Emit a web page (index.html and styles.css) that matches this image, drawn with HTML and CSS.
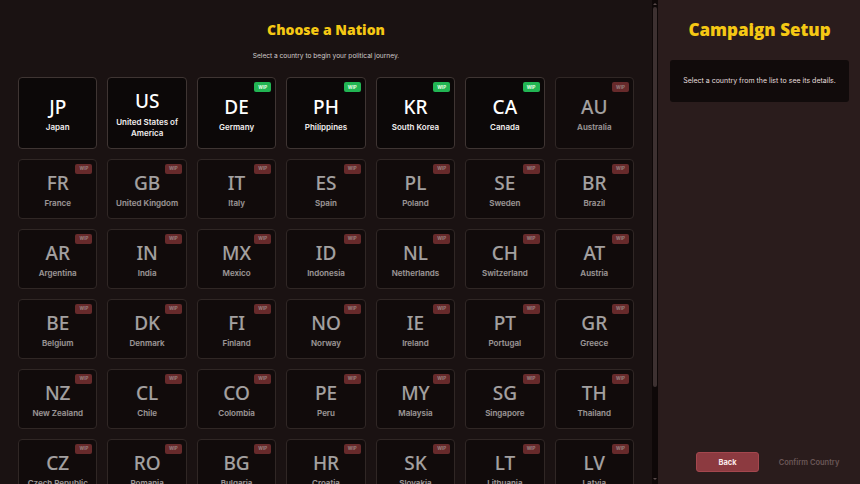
FILE: index.html
```html
<!DOCTYPE html>
<html lang="en">
<head>
<meta charset="utf-8">
<title>Choose a Nation</title>
<link rel="stylesheet" href="styles.css">
</head>
<body>
<main class="picker">
  <header class="picker-head">
    <h1 class="picker-title">Choose a Nation</h1>
    <p class="picker-sub">Select a country to begin your political journey.</p>
  </header>
  <div class="grid">
    <div class="card"><span class="code">JP</span><span class="name">Japan</span></div>
    <div class="card"><span class="code">US</span><span class="name">United States of America</span></div>
    <div class="card"><span class="badge badge-green">WIP</span><span class="code">DE</span><span class="name">Germany</span></div>
    <div class="card"><span class="badge badge-green">WIP</span><span class="code">PH</span><span class="name">Philippines</span></div>
    <div class="card"><span class="badge badge-green">WIP</span><span class="code">KR</span><span class="name">South Korea</span></div>
    <div class="card"><span class="badge badge-green">WIP</span><span class="code">CA</span><span class="name">Canada</span></div>
    <div class="card off"><span class="badge">WIP</span><span class="code">AU</span><span class="name">Australia</span></div>

    <div class="card off"><span class="badge">WIP</span><span class="code">FR</span><span class="name">France</span></div>
    <div class="card off"><span class="badge">WIP</span><span class="code">GB</span><span class="name">United Kingdom</span></div>
    <div class="card off"><span class="badge">WIP</span><span class="code">IT</span><span class="name">Italy</span></div>
    <div class="card off"><span class="badge">WIP</span><span class="code">ES</span><span class="name">Spain</span></div>
    <div class="card off"><span class="badge">WIP</span><span class="code">PL</span><span class="name">Poland</span></div>
    <div class="card off"><span class="badge">WIP</span><span class="code">SE</span><span class="name">Sweden</span></div>
    <div class="card off"><span class="badge">WIP</span><span class="code">BR</span><span class="name">Brazil</span></div>

    <div class="card off"><span class="badge">WIP</span><span class="code">AR</span><span class="name">Argentina</span></div>
    <div class="card off"><span class="badge">WIP</span><span class="code">IN</span><span class="name">India</span></div>
    <div class="card off"><span class="badge">WIP</span><span class="code">MX</span><span class="name">Mexico</span></div>
    <div class="card off"><span class="badge">WIP</span><span class="code">ID</span><span class="name">Indonesia</span></div>
    <div class="card off"><span class="badge">WIP</span><span class="code">NL</span><span class="name">Netherlands</span></div>
    <div class="card off"><span class="badge">WIP</span><span class="code">CH</span><span class="name">Switzerland</span></div>
    <div class="card off"><span class="badge">WIP</span><span class="code">AT</span><span class="name">Austria</span></div>

    <div class="card off"><span class="badge">WIP</span><span class="code">BE</span><span class="name">Belgium</span></div>
    <div class="card off"><span class="badge">WIP</span><span class="code">DK</span><span class="name">Denmark</span></div>
    <div class="card off"><span class="badge">WIP</span><span class="code">FI</span><span class="name">Finland</span></div>
    <div class="card off"><span class="badge">WIP</span><span class="code">NO</span><span class="name">Norway</span></div>
    <div class="card off"><span class="badge">WIP</span><span class="code">IE</span><span class="name">Ireland</span></div>
    <div class="card off"><span class="badge">WIP</span><span class="code">PT</span><span class="name">Portugal</span></div>
    <div class="card off"><span class="badge">WIP</span><span class="code">GR</span><span class="name">Greece</span></div>

    <div class="card off"><span class="badge">WIP</span><span class="code">NZ</span><span class="name">New Zealand</span></div>
    <div class="card off"><span class="badge">WIP</span><span class="code">CL</span><span class="name">Chile</span></div>
    <div class="card off"><span class="badge">WIP</span><span class="code">CO</span><span class="name">Colombia</span></div>
    <div class="card off"><span class="badge">WIP</span><span class="code">PE</span><span class="name">Peru</span></div>
    <div class="card off"><span class="badge">WIP</span><span class="code">MY</span><span class="name">Malaysia</span></div>
    <div class="card off"><span class="badge">WIP</span><span class="code">SG</span><span class="name">Singapore</span></div>
    <div class="card off"><span class="badge">WIP</span><span class="code">TH</span><span class="name">Thailand</span></div>

    <div class="card off"><span class="badge">WIP</span><span class="code">CZ</span><span class="name">Czech Republic</span></div>
    <div class="card off"><span class="badge">WIP</span><span class="code">RO</span><span class="name">Romania</span></div>
    <div class="card off"><span class="badge">WIP</span><span class="code">BG</span><span class="name">Bulgaria</span></div>
    <div class="card off"><span class="badge">WIP</span><span class="code">HR</span><span class="name">Croatia</span></div>
    <div class="card off"><span class="badge">WIP</span><span class="code">SK</span><span class="name">Slovakia</span></div>
    <div class="card off"><span class="badge">WIP</span><span class="code">LT</span><span class="name">Lithuania</span></div>
    <div class="card off"><span class="badge">WIP</span><span class="code">LV</span><span class="name">Latvia</span></div>
  </div>
</main>
<div class="scrollbar" aria-hidden="true">
  <span class="arrow arrow-up"></span>
  <span class="thumb"></span>
  <span class="arrow arrow-down"></span>
</div>
<aside class="panel">
  <h2 class="panel-title">Campaign Setup</h2>
  <div class="panel-box">Select a country from the list to see its details.</div>
  <div class="actions">
    <button class="btn btn-back">Back</button>
    <button class="btn btn-confirm" disabled>Confirm Country</button>
  </div>
</aside>
</body>
</html>
```

FILE: styles.css
```css
* { box-sizing: border-box; }

html, body {
  margin: 0;
  height: 100%;
}

body {
  display: flex;
  height: 484px;
  overflow: hidden;
  background: #1a1212;
  font-family: Inter, "Liberation Sans", sans-serif;
  color: #fff;
}

.picker {
  width: 652px;
  flex: none;
  height: 100%;
  overflow: hidden;
  padding: 20px 18px 31px 18px;
  background: #1a1212;
}

/* scrollbar strip */
.scrollbar {
  width: 6px;
  flex: none;
  display: flex;
  flex-direction: column;
  align-items: center;
  background: #0e0808;
}

.thumb {
  width: 4px;
  height: 380px;
  margin-top: 2px;
  border-radius: 2px;
  background: #3d3131;
}

.arrow {
  width: 0;
  height: 0;
  border-left: 2px solid transparent;
  border-right: 2px solid transparent;
}

.arrow-up {
  margin-top: 3px;
  border-bottom: 2px solid #5a4c4c;
}

.arrow-down {
  margin-top: auto;
  margin-bottom: 4px;
  border-top: 2px solid #5a4c4c;
}

.picker-head { text-align: center; }

.picker-title {
  margin: 0;
  font-family: "Open Sans", sans-serif;
  font-weight: 800;
  font-size: 14px;
  line-height: 20px;
  color: #f5c814;
}

.picker-sub {
  margin: 12px 0 0;
  font-size: 6.6px;
  line-height: 9px;
  color: #d2cccc;
}

.grid {
  margin-top: 16px;
  display: grid;
  grid-template-columns: repeat(7, 1fr);
  gap: 10px;
}

.card {
  position: relative;
  display: flex;
  flex-direction: column;
  align-items: center;
  justify-content: center;
  gap: 3.5px;
  padding: 11px 6px 8px;
  min-height: 60px;
  background: #0c0808;
  border: 1px solid #3f3533;
  border-radius: 4px;
  text-align: center;
}

.card.off { opacity: 0.6; }

.code {
  font-family: "Noto Sans", "Open Sans", sans-serif;
  font-weight: 500;
  font-size: 19px;
  line-height: 24px;
  color: #fff;
}

.name {
  font-weight: 600;
  font-size: 8px;
  line-height: 11.5px;
  color: #f2eeee;
}

.badge {
  position: absolute;
  top: 4px;
  right: 4px;
  width: 17px;
  height: 10px;
  display: flex;
  align-items: center;
  justify-content: center;
  border-radius: 2px;
  background: #9a3a3c;
  color: #e6c8c8;
  font-weight: 700;
  font-size: 4.5px;
}

.badge-green {
  background: #22b553;
  color: #e9ffe9;
}

.panel {
  flex: 1;
  display: flex;
  flex-direction: column;
  padding: 19px 11px 12px 12px;
  background: #2a1c1c;
}

.panel-title {
  margin: 0;
  text-align: center;
  font-family: "Open Sans", sans-serif;
  font-weight: 800;
  font-size: 17px;
  line-height: 22px;
  color: #f5c814;
}

.panel-box {
  margin-top: 19px;
  padding: 16px 6px;
  background: #110b0b;
  border-radius: 3px;
  font-size: 7px;
  line-height: 10px;
  color: #e4dede;
  text-align: center;
}

.actions {
  margin-top: auto;
  display: flex;
  justify-content: flex-end;
  gap: 10px;
}

.btn {
  height: 20px;
  border-radius: 3px;
  font-family: Inter, "Liberation Sans", sans-serif;
  font-weight: 700;
  font-size: 7.5px;
}

.btn-back {
  width: 63px;
  background: #8c3a40;
  border: 1px solid #a4474e;
  color: #fbeaea;
}

.btn-confirm {
  width: 80px;
  background: transparent;
  border: 1px solid transparent;
  color: #6b5757;
  font-weight: 600;
}
```
